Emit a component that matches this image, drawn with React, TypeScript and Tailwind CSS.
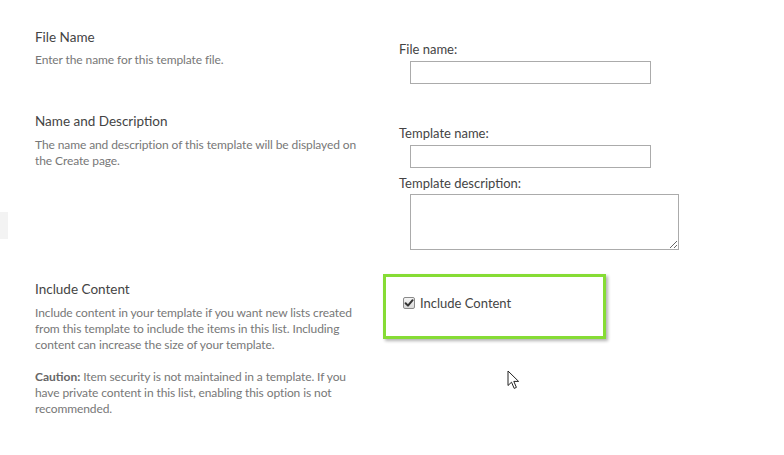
import React from 'react';

const font = { fontFamily: 'Lato, "Open Sans", Arial, sans-serif' };

function SectionTitle({ children }: { children: React.ReactNode }) {
  return <h3 className="text-[13.5px] leading-5 text-[#444]">{children}</h3>;
}

function FieldLabel({ children }: { children: React.ReactNode }) {
  return <label className="block text-[13px] leading-[18px] text-[#444]">{children}</label>;
}

function Pointer() {
  return (
    <svg width="14" height="20" viewBox="0 0 14 20" className="absolute left-[507px] top-[370px]">
      <path
        d="M1 1 L1 15.5 L4.5 12.2 L7.2 18.4 L9.4 17.4 L6.8 11.4 L11.6 11.4 Z"
        fill="#fff"
        stroke="#222"
        strokeWidth="1"
        strokeLinejoin="round"
      />
    </svg>
  );
}

const desc = 'text-[12px] leading-4 tracking-[-0.1px] text-[#777]';

export default function App() {
  return (
    <div className="relative w-[784px] h-[455px] bg-white overflow-hidden" style={font}>
      <div className="absolute left-0 top-[212px] w-[8px] h-[27px] bg-[#f3f3f3]" />

      {/* File Name */}
      <section className="flex pt-[27px]">
        <div className="pl-[35px] w-[399px] shrink-0">
          <SectionTitle>File Name</SectionTitle>
          <p className={`mt-[5px] ${desc}`}>Enter the name for this template file.</p>
        </div>
        <div className="pt-[13px]">
          <FieldLabel>File name:</FieldLabel>
          <input className="block ml-[11px] mt-[3px] w-[241px] h-[23px] border border-[#ababab] bg-white outline-none" />
        </div>
      </section>

      {/* Name and Description */}
      <section className="flex pt-[27px]">
        <div className="pl-[35px] w-[399px] shrink-0">
          <SectionTitle>Name and Description</SectionTitle>
          <p className={`mt-[6px] w-[330px] ${desc}`}>
            The name and description of this template will be displayed on the Create page.
          </p>
        </div>
        <div className="pt-[13px]">
          <FieldLabel>Template name:</FieldLabel>
          <input className="block ml-[11px] mt-[3px] w-[241px] h-[23px] border border-[#ababab] bg-white outline-none" />
          <div className="mt-[6px]">
            <FieldLabel>Template description:</FieldLabel>
          </div>
          <textarea className="block ml-[11px] mt-[2px] w-[269px] h-[56px] border border-[#ababab] bg-white outline-none" />
        </div>
      </section>

      {/* Include Content */}
      <section className="flex pt-[29px]">
        <div className="pl-[35px] w-[383px] shrink-0">
          <SectionTitle>Include Content</SectionTitle>
          <p className={`mt-[6px] w-[330px] ${desc}`}>
            Include content in your template if you want new lists created from this template to include the items in this list. Including content can increase the size of your template.
          </p>
          <p className={`mt-[16px] w-[330px] ${desc}`}>
            <b className="font-bold tracking-normal text-[#666]">Caution:</b>{' '}
            Item security is not maintained in a template. If you have private content in this list, enabling this option is not recommended.
          </p>
        </div>
        <div className="-mt-[5px]">
          <div className="w-[223px] h-[65px] border-[3px] border-[#86dc35] shadow-[2px_2px_3px_rgba(0,0,0,0.3)] pl-[17px] pt-[18px]">
            <label className="flex items-center gap-[5px] text-[13px] leading-4 text-[#444]">
              <span className="relative inline-block w-[12px] h-[12px] rounded-[2px] border border-[#8a8a8a] bg-gradient-to-b from-[#f4f4f4] to-[#d9d9d9]">
                <svg viewBox="0 0 12 12" className="absolute -left-[1px] -top-[1px] w-[12px] h-[12px]">
                  <path d="M2.6 6.2 L5 8.6 L9.6 3.2" fill="none" stroke="#333" strokeWidth="2" strokeLinecap="round" strokeLinejoin="round" />
                </svg>
              </span>
              Include Content
            </label>
          </div>
        </div>
      </section>

      <Pointer />
    </div>
  );
}
